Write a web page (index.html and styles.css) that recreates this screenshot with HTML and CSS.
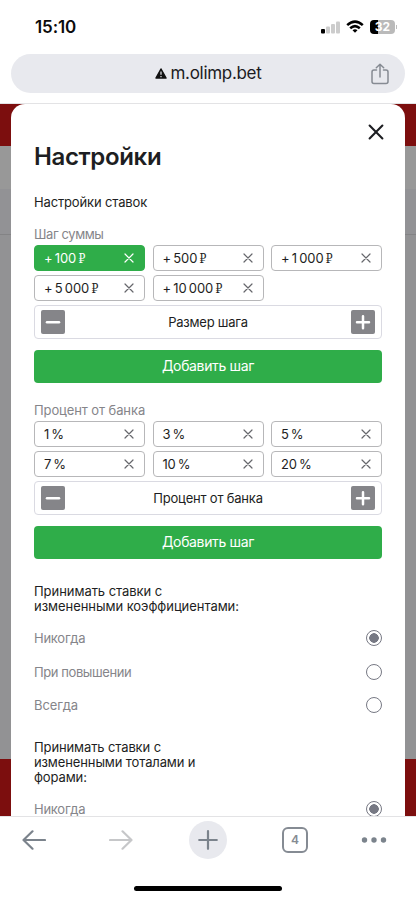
FILE: index.html
```html
<!DOCTYPE html>
<html lang="ru">
<head>
<meta charset="utf-8">
<meta name="viewport" content="width=device-width, initial-scale=1">
<title>Настройки</title>
<link rel="stylesheet" href="styles.css">
</head>
<body>
<svg class="defs" width="0" height="0">
  <symbol id="cross" viewBox="0 0 10 10"><path d="M1 1l8 8M9 1L1 9"/></symbol>
  <symbol id="minus" viewBox="0 0 24 24"><path d="M6 12.3h12"/></symbol>
  <symbol id="plus" viewBox="0 0 24 24"><path d="M6 12.3h12M12 6.3v12"/></symbol>
</svg>
<header class="browser-top">
  <div class="status">
    <span class="clock">15:10</span>
    <div class="indicators">
      <svg width="19" height="14" viewBox="0 0 19 14"><rect x="0" y="9" width="4" height="4.5" rx="1" fill="#000"/><rect x="5" y="6.500" width="4" height="7" rx="1" fill="#ccc"/><rect x="10" y="4" width="4" height="9.500" rx="1" fill="#ccc"/><rect x="15" y="1.500" width="4" height="12" rx="1" fill="#ccc"/></svg>
      <svg width="18" height="14" viewBox="0 0 18 14" fill="none" stroke="#000" stroke-width="2.500"><path d="M1.200 5.200Q9-2 16.800 5.200"/><path d="M4.200 8.300Q9 4 13.800 8.300"/><path d="M9 12.700L6.500 10.200Q9 8.300 11.500 10.200Z" fill="#000" stroke="none"/></svg>
      <div class="battery"><span>32</span></div>
    </div>
  </div>
  <div class="address">
    <span class="side"></span>
    <div class="host">
      <svg width="12" height="11" viewBox="0 0 12 11"><path d="M6 1L11 10H1Z" fill="#111" stroke="#111" stroke-width="1.500" stroke-linejoin="round"/><path d="M6 3.600v3.200M6 7.900v1.300" stroke="#e8e9ee" stroke-width="1.200"/></svg>
      <span>m.olimp.bet</span>
    </div>
    <span class="side">
      <svg width="18" height="22" viewBox="0 0 18 22" fill="none" stroke="#868b93" stroke-width="1.500" stroke-linecap="round" stroke-linejoin="round"><path d="M5.500 7H3a2 2 0 0 0-2 2v9.500a2 2 0 0 0 2 2h12a2 2 0 0 0 2-2V9a2 2 0 0 0-2-2h-2.500M9 14V1.200M5.300 4.700L9 1.200l3.700 3.500"/></svg>
    </span>
  </div>
</header>

<main class="page">
  <div class="backdrop"><i class="bd-head"></i><i class="bd-bar"></i><i class="bd-sub"></i><i class="bd-body"></i><i class="bd-foot"></i></div>
  <section class="modal">
    <div class="close-row"><svg class="close"><use href="#cross"/></svg></div>
    <h1>Настройки</h1>
    <h2>Настройки ставок</h2>

    <div class="group">
      <p class="label l-sum">Шаг суммы</p>
      <div class="chips sums">
        <div class="chip active"><span>+ 100 <b>₽</b></span><svg><use href="#cross"/></svg></div>
        <div class="chip"><span>+ 500 <b>₽</b></span><svg><use href="#cross"/></svg></div>
        <div class="chip"><span>+ 1 000 <b>₽</b></span><svg><use href="#cross"/></svg></div>
        <div class="chip"><span>+ 5 000 <b>₽</b></span><svg><use href="#cross"/></svg></div>
        <div class="chip"><span>+ 10 000 <b>₽</b></span><svg><use href="#cross"/></svg></div>
      </div>
      <div class="stepper"><svg><use href="#minus"/></svg><span>Размер шага</span><svg><use href="#plus"/></svg></div>
      <div class="button">Добавить шаг</div>
    </div>

    <div class="group">
      <p class="label l-bank">Процент от банка</p>
      <div class="chips percents">
        <div class="chip"><span>1 %</span><svg><use href="#cross"/></svg></div>
        <div class="chip"><span>3 %</span><svg><use href="#cross"/></svg></div>
        <div class="chip"><span>5 %</span><svg><use href="#cross"/></svg></div>
        <div class="chip"><span>7 %</span><svg><use href="#cross"/></svg></div>
        <div class="chip"><span>10 %</span><svg><use href="#cross"/></svg></div>
        <div class="chip"><span>20 %</span><svg><use href="#cross"/></svg></div>
      </div>
      <div class="stepper bank"><svg><use href="#minus"/></svg><span>Процент от банка</span><svg><use href="#plus"/></svg></div>
      <div class="button">Добавить шаг</div>
    </div>

    <h3 class="odds">Принимать ставки с<br>измененными коэффициентами:</h3>
    <div class="option"><span>Никогда</span><i class="radio on"></i></div>
    <div class="option mid"><span>При повышении</span><i class="radio"></i></div>
    <div class="option last"><span>Всегда</span><i class="radio"></i></div>

    <h3 class="totals">Принимать ставки с<br>измененными тоталами и<br>форами:</h3>
    <div class="option"><span>Никогда</span><i class="radio on"></i></div>
  </section>
</main>

<footer class="browser-bottom">
  <nav>
    <span><svg width="24" height="20" viewBox="0 0 24 20" fill="none" stroke="#7b838c" stroke-width="2.200" stroke-linecap="round" stroke-linejoin="round"><path d="M23 10H1.500M10.500 1.300L1.500 10l9 8.700"/></svg></span>
    <span><svg width="24" height="20" viewBox="0 0 24 20" fill="none" stroke="#c6c7c9" stroke-width="2.200" stroke-linecap="round" stroke-linejoin="round"><path d="M1 10h21.500M13.500 1.300l9 8.700-9 8.700"/></svg></span>
    <span><em class="new-tab"><svg width="20" height="20" viewBox="0 0 20 20" fill="none" stroke="#7b838c" stroke-width="2.200" stroke-linecap="round"><path d="M1.200 10h17.600M10 1.200v17.600"/></svg></em></span>
    <span><em class="tabs">4</em></span>
    <span><svg width="26" height="6" viewBox="0 0 26 6" fill="#7b838c"><circle cx="3.500" cy="3" r="2.700"/><circle cx="13" cy="3" r="2.700"/><circle cx="22.500" cy="3" r="2.700"/></svg></span>
  </nav>
  <div class="home"></div>
</footer>
</body>
</html>
```
FILE: styles.css
```css
* { box-sizing: border-box; }
body {
  margin: 0;
  height: 899px;
  overflow: hidden;
  display: flex;
  flex-direction: column;
  background: #fff;
  color: #1d1e22;
  font-family: Inter, "Noto Sans", sans-serif;
}
svg { display: block; flex: none; }
.defs { position: absolute; }
h1, h2, h3, p { margin: 0; font-weight: 400; white-space: nowrap; }
em { font-style: normal; }

.browser-top { height: 103px; flex: none; }
.status {
  height: 54px;
  padding: 0 20px 0 35px;
  display: flex;
  align-items: center;
  justify-content: space-between;
}
.clock { font-size: 17px; font-weight: 600; letter-spacing: -0.1px; color: #0b0b0c; }
.indicators { display: flex; align-items: center; gap: 6px; }
.battery {
  position: relative;
  width: 25px;
  height: 14px;
  margin-right: 1px;
  border-radius: 4px;
  background: linear-gradient(90deg, #000 8px, #bababa 8px);
  color: #fff;
  font-size: 12px;
  font-weight: 700;
  line-height: 14px;
  text-align: center;
}
.battery::after {
  content: "";
  position: absolute;
  right: -2px;
  top: 5px;
  width: 1px;
  height: 4px;
  background: #bdbdbd;
}
.address {
  margin: 0 11px;
  padding: 0 16px;
  height: 39px;
  border-radius: 20px;
  background: #e8e9ee;
  display: flex;
  align-items: center;
  justify-content: space-between;
}
.side { width: 18px; }
.host { display: flex; align-items: center; gap: 4px; font-size: 17px; line-height: 20px; letter-spacing: -0.3px; color: #1b1b1e; padding-bottom: 1px; }

.page {
  position: relative;
  height: 713px;
  flex: none;
  overflow: hidden;
  border-top: 1px solid #e3e3e5;
}
.backdrop { position: absolute; inset: 0; display: flex; flex-direction: column; }
.bd-head { height: 42px; background: #7c0e0e; }
.bd-bar { height: 43px; background: #989898; }
.bd-sub { height: 46px; background: #929295; border-bottom: 1px solid #838385; }
.bd-body { height: 524px; background: #929294; }
.bd-foot { flex: 1; background: #7c0e0e; }

.modal {
  position: relative;
  height: 740px;
  margin: 0 11px;
  padding: 0 23px;
  border-radius: 14px;
  background: #fff;
}
.close-row { height: 37px; padding: 20px 11px 0 0; margin-right: -13px; display: flex; justify-content: flex-end; }
.close { width: 16px; height: 16px; fill: none; stroke: #1d1e22; stroke-width: 1.3; stroke-linecap: round; }
h1 { height: 31px; line-height: 31px; font-size: 24px; font-weight: 600; letter-spacing: -0.35px; }
h2 { margin-top: 17px; height: 26px; line-height: 26px; font-size: 13px; letter-spacing: -0.15px; }

.label { height: 16px; line-height: 16px; font-size: 13px; color: #85858a; margin-bottom: 3px; }
.l-sum { margin-top: 11px; letter-spacing: -0.4px; }
.l-bank { margin-top: 19px; letter-spacing: -0.1px; }
.chips { display: grid; grid-template-columns: repeat(3, 111px); justify-content: space-between; gap: 4px 0; }
.chip {
  height: 26px;
  padding: 0 10px 0 9px;
  border: 1px solid #b7b7b9;
  border-radius: 4px;
  display: flex;
  align-items: center;
  justify-content: space-between;
  font-size: 13px;
  line-height: 16px;
  white-space: nowrap;
  word-spacing: -1.3px;
}
.sums .chip { letter-spacing: -0.1px; }
.percents .chip { letter-spacing: -0.2px; }
.chip svg { width: 10px; height: 10px; fill: none; stroke: #66676c; stroke-width: 1.2; stroke-linecap: round; }
.chip b { font-family: "DejaVu Serif Condensed", "DejaVu Serif", serif; font-size: 12px; font-weight: 400; line-height: 1; }
.chip.active { border-color: #2fad49; background: #2fad49; color: #fff; }
.chip.active svg { stroke: #fff; }
.stepper {
  margin-top: 4px;
  height: 34px;
  padding: 0 6px;
  border: 1px solid #dadae2;
  border-radius: 4px;
  display: flex;
  align-items: center;
  justify-content: space-between;
  font-size: 13px;
  letter-spacing: -0.25px;
}
.stepper.bank { letter-spacing: -0.2px; }
.stepper svg {
  width: 24px;
  height: 24px;
  border-radius: 2px;
  background: #858589;
  stroke: #fff;
  stroke-width: 2.5;
  stroke-linecap: round;
}
.button {
  margin-top: 11px;
  height: 33px;
  border-radius: 4px;
  background: #2fad49;
  color: #fff;
  font-size: 14px;
  letter-spacing: -0.35px;
  line-height: 32px;
  text-align: center;
}
h3 { font-size: 13px; line-height: 15px; letter-spacing: -0.05px; }
.odds { margin: 25px 0 7px; }
.totals { margin: 20px 0 7px; letter-spacing: -0.12px; }
.option { height: 33px; display: flex; align-items: center; justify-content: space-between; font-size: 13px; letter-spacing: -0.25px; color: #85858a; }
.option.mid { letter-spacing: -0.42px; height: 35px; }
.option.last { height: 31px; letter-spacing: -0.1px; }
.radio { width: 16px; height: 16px; border: 1.500px solid #777984; border-radius: 50%; }
.radio.on { background: radial-gradient(circle, #777984 4.500px, #fff 5px); }

.browser-bottom { height: 83px; flex: none; border-top: 1px solid #e3e3e5; background: #fff; }
nav { height: 46px; display: grid; grid-template-columns: 68px 105px 70px 104px 54px; }
nav span { display: flex; align-items: center; justify-content: center; }
.new-tab { width: 38px; height: 38px; border-radius: 50%; background: #e8e9ee; display: flex; align-items: center; justify-content: center; }
.tabs { width: 26px; height: 26px; border: 2px solid #858b93; border-radius: 6px; font-size: 12px; font-weight: 600; line-height: 22px; text-align: center; color: #858b93; }
.home { width: 148px; height: 5px; margin: 23px auto 0; border-radius: 3px; background: #000; }
```
